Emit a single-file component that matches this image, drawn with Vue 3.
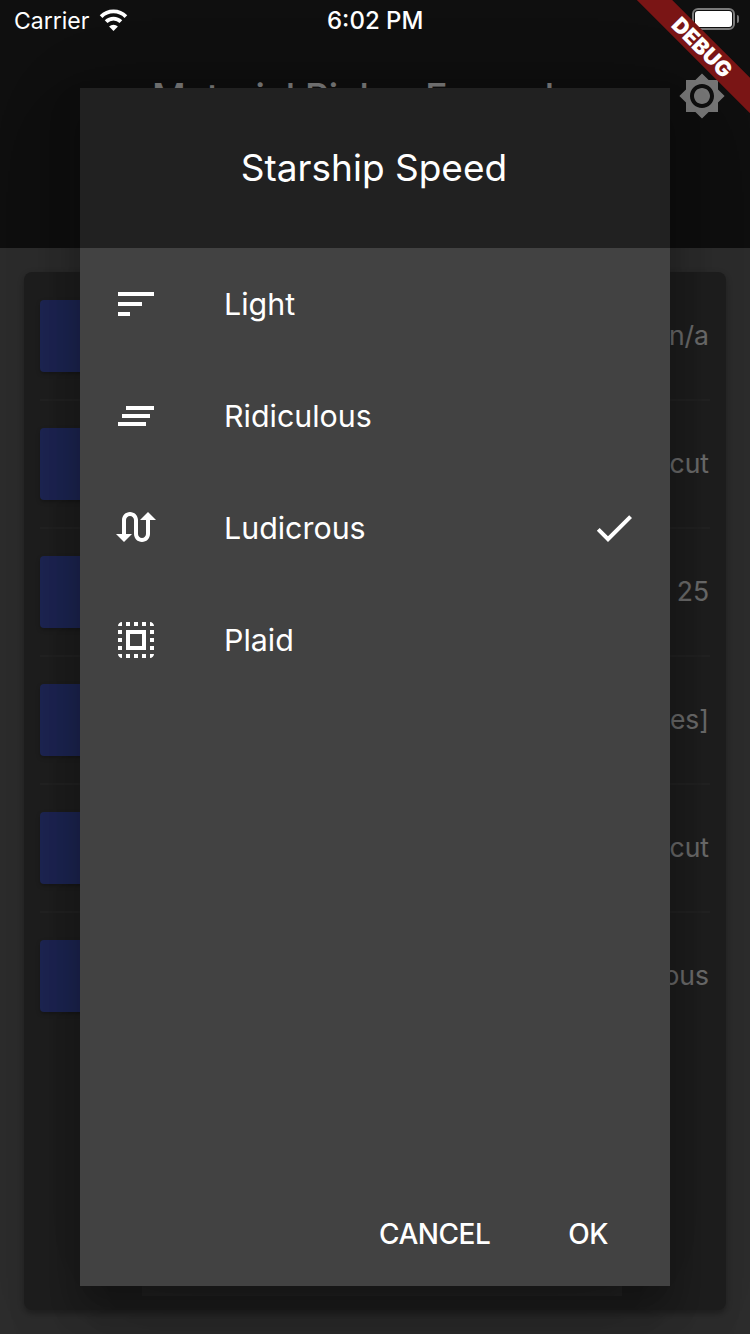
<script setup>
const rows = [
  { id: 1, value: 'n/a' },
  { id: 2, value: 'Shortcut' },
  { id: 3, value: '25' },
  { id: 4, value: '[Multiple values]' },
  { id: 5, value: 'Shortcut' },
  { id: 6, value: 'Ridiculous' }
]

const speeds = [
  { name: 'Light', path: 'M3 18h6v-2H3v2zM3 6v2h18V6H3zm0 7h12v-2H3v2z' },
  { name: 'Ridiculous', path: 'M7 7h14v2H7zM5 11h14v2H5zM3 15h14v2H3z' },
  {
    name: 'Ludicrous',
    selected: true,
    path: 'M18 4l-4 4h3v7c0 1.1-.9 2-2 2s-2-.9-2-2V8c0-2.21-1.79-4-4-4S5 5.79 5 8v7H2l4 4 4-4H7V8c0-1.1.9-2 2-2s2 .9 2 2v7c0 2.21 1.79 4 4 4s4-1.79 4-4V8h3l-4-4z'
  },
  {
    name: 'Plaid',
    path: 'M3 5h2V3c-1.1 0-2 .9-2 2zm0 8h2v-2H3v2zm4 8h2v-2H7v2zM3 9h2V7H3v2zm10-6h-2v2h2V3zm6 0v2h2c0-1.1-.9-2-2-2zM5 21v-2H3c0 1.1.9 2 2 2zm-2-4h2v-2H3v2zM9 3H7v2h2V3zm2 18h2v-2h-2v2zm8-8h2v-2h-2v2zm0 8c1.1 0 2-.9 2-2h-2v2zm0-12h2V7h-2v2zm0 8h2v-2h-2v2zm-4 4h2v-2h-2v2zm0-16h2V3h-2v2zM7 17h10V7H7v10zm2-8h6v6H9V9z'
  }
]
</script>

<template>
  <div class="page">
    <header class="appbar">
      <div class="toolbar">
        <span class="appbar-title">Material Picker Examples</span>
        <svg class="settings" viewBox="0 0 24 24" width="48" height="48">
          <path
            fill="#fff"
            d="M20 8.69V4h-4.69L12 .69 8.69 4H4v4.69L.69 12 4 15.31V20h4.69L12 23.31 15.31 20H20v-4.69L23.31 12 20 8.69zM12 18c-3.31 0-6-2.69-6-6s2.69-6 6-6 6 2.69 6 6-2.69 6-6 6zm0-10c-2.21 0-4 1.79-4 4s1.79 4 4 4 4-1.79 4-4-1.79-4-4-4z"
          />
        </svg>
      </div>
    </header>

    <main class="card">
      <div v-for="row in rows" :key="row.id" class="row">
        <div class="thumb"></div>
        <span class="value">{{ row.value }}</span>
      </div>
      <div class="card-button"></div>
    </main>

    <div class="scrim"></div>

    <div class="status">
      <div class="status-left">
        <span class="carrier">Carrier</span>
        <svg class="wifi" viewBox="0 0 29 22" width="29" height="22">
          <path d="M2.1 7.6a17.5 17.5 0 0 1 24.8 0" fill="none" stroke="#fff" stroke-width="3.8" />
          <path d="M7.1 12.6a10.5 10.5 0 0 1 14.8 0" fill="none" stroke="#fff" stroke-width="3.8" />
          <path d="M14.5 22l-4.4-4.4a6.2 6.2 0 0 1 8.8 0z" fill="#fff" />
        </svg>
      </div>
      <span class="time">6:02 PM</span>
      <div class="battery">
        <div class="battery-fill"></div>
        <div class="battery-nub"></div>
      </div>
    </div>

    <section class="dialog">
      <h2 class="dialog-title">Starship Speed</h2>
      <ul class="options">
        <li v-for="item in speeds" :key="item.name" class="option">
          <svg viewBox="0 0 24 24" width="48" height="48">
            <path fill="#fff" :d="item.path" />
          </svg>
          <span class="option-name">{{ item.name }}</span>
          <svg v-if="item.selected" class="check" viewBox="0 0 24 24" width="48" height="48">
            <path fill="#fff" d="M9 16.17L4.83 12l-1.42 1.41L9 19 21 7l-1.41-1.41z" />
          </svg>
        </li>
      </ul>
      <footer class="actions">
        <span>CANCEL</span>
        <span>OK</span>
      </footer>
    </section>

    <div class="ribbon">DEBUG</div>
  </div>
</template>

<style>
html,
body {
  margin: 0;
  background: #616161;
}
</style>

<style scoped>
.page {
  position: relative;
  width: 750px;
  height: 1334px;
  overflow: hidden;
  background: #616161;
  font-family: Inter, "Liberation Sans", sans-serif;
  display: flex;
  flex-direction: column;
}

.appbar {
  height: 248px;
  padding-top: 40px;
  box-sizing: border-box;
  background: #212121;
  flex-shrink: 0;
}

.toolbar {
  height: 112px;
  display: flex;
  align-items: center;
  padding: 0 24px 0 152px;
}

.appbar-title {
  flex: 1;
  color: #fff;
  font-size: 37px;
  font-weight: 500;
  white-space: nowrap;
}

.settings {
  display: block;
}

.card {
  margin: 24px;
  flex: 1;
  background: #424242;
  border-radius: 8px;
  box-shadow: 0 4px 4px rgba(0, 0, 0, 0.14), 0 2px 10px rgba(0, 0, 0, 0.2);
  display: flex;
  flex-direction: column;
  padding: 0 16px 14px;
}

.row {
  height: 128px;
  flex-shrink: 0;
  display: flex;
  align-items: center;
  justify-content: space-between;
  box-shadow: 0 1px 0 #4b4b4b, inset 0 -1px 0 #4b4b4b;
}

.row:nth-child(6) {
  box-shadow: none;
}

.thumb {
  width: 200px;
  height: 72px;
  background: #3f51b5;
  border-radius: 4px;
  box-shadow: 0 2px 4px rgba(0, 0, 0, 0.25);
}

.value {
  color: #ebebeb;
  font-size: 26.5px;
  margin-right: 1px;
  margin-bottom: 2px;
}

.card-button {
  margin: auto 88px 0 102px;
  height: 72px;
  background: #4f4f4f;
}

.scrim {
  position: absolute;
  inset: 0;
  background: rgba(0, 0, 0, 0.54);
}

.status {
  position: absolute;
  top: 0;
  left: 0;
  right: 0;
  height: 40px;
  color: #fff;
  font-size: 23px;
  display: flex;
  align-items: center;
  justify-content: space-between;
  padding: 0 11px 0 14px;
}

.status-left {
  display: flex;
  align-items: center;
  gap: 10px;
}

.carrier {
  margin-top: 1px;
}

.time {
  position: absolute;
  left: 327px;
  top: 6px;
  font-size: 24px;
  font-weight: 500;
}

.wifi {
  display: block;
}

.battery {
  position: relative;
  width: 43px;
  height: 22px;
  box-sizing: border-box;
  border: 2px solid #7a7a7a;
  border-radius: 6px;
  margin-top: -2px;
  margin-right: 4px;
}

.battery-fill {
  position: absolute;
  inset: 1px;
  background: #fff;
  border-radius: 3px;
}

.battery-nub {
  position: absolute;
  right: -6px;
  top: 5px;
  width: 2px;
  height: 8px;
  background: #7a7a7a;
  border-radius: 0 2px 2px 0;
}

.dialog {
  position: absolute;
  left: 80px;
  top: 88px;
  width: 590px;
  height: 1198px;
  background: #424242;
  display: flex;
  flex-direction: column;
  box-shadow: 0 48px 76px rgba(0, 0, 0, 0.14), 0 18px 92px rgba(0, 0, 0, 0.12), 0 22px 30px rgba(0, 0, 0, 0.2);
}

.dialog-title {
  margin: 0;
  height: 160px;
  box-sizing: border-box;
  padding: 0 2px 2px 0;
  background: #212121;
  color: #fff;
  font-size: 37px;
  font-weight: 400;
  display: flex;
  align-items: center;
  justify-content: center;
}

.options {
  list-style: none;
  margin: 0;
  padding: 0;
  flex: 1;
}

.option {
  height: 112px;
  display: flex;
  align-items: center;
  padding: 0 32px;
}

.option-name {
  margin-left: 64px;
  flex: 1;
  color: #fff;
  font-size: 30.4px;
}

.actions {
  height: 104px;
  display: flex;
  justify-content: flex-end;
  align-items: center;
  gap: 78px;
  padding: 0 62px 0 0;
  color: #fff;
  font-size: 28px;
  font-weight: 500;
  letter-spacing: -0.5px;
}

.ribbon {
  position: absolute;
  left: 622px;
  top: 35px;
  width: 160px;
  height: 25px;
  background: #7a1515;
  color: #fff;
  font-size: 21.5px;
  font-weight: 900;
  line-height: 25px;
  text-align: center;
  transform: rotate(45deg);
}
</style>
